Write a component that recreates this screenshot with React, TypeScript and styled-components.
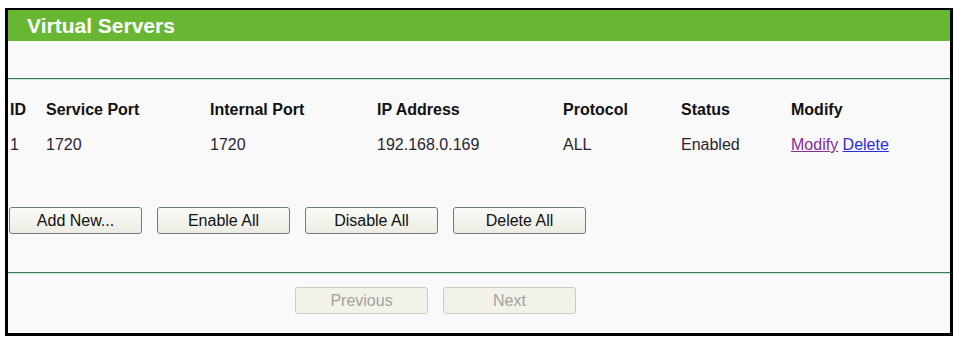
import React from "react";
import styled, { createGlobalStyle } from "styled-components";

const GlobalStyle = createGlobalStyle`
  html, body { margin: 0; padding: 0; background: #ffffff; }
  body { font-family: "Liberation Sans", Arial, sans-serif; }
`;

const Frame = styled.div`
  margin: 8px 0 0 5px;
  width: 942px;
  height: 323px;
  border-style: solid;
  border-color: #000;
  border-width: 2px 3px 3px 3px;
  background: #f9f9f9;
  display: flex;
  flex-direction: column;
`;

const TitleBar = styled.div`
  height: 31px;
  background: #67b733;
  color: #ffffff;
  font-weight: bold;
  font-size: 21px;
  line-height: 31px;
  padding-left: 19px;
`;

const Divider = styled.div<{ $top: number }>`
  margin-top: ${(p) => p.$top}px;
  height: 1px;
  background: #3f7a58;
  border-bottom: 1px solid #c4e6d0;
`;

const Table = styled.div`
  margin-top: 12px;
  display: grid;
  grid-template-columns: 36px 164px 167px 186px 118px 110px 1fr;
  padding-left: 2px;
`;

const Cell = styled.div<{ $head?: boolean }>`
  font-size: 16px;
  line-height: 35px;
  height: 35px;
  white-space: nowrap;
  font-weight: ${(p) => (p.$head ? "bold" : "normal")};
  color: ${(p) => (p.$head ? "#111" : "#2a2430")};
`;

const Link = styled.a<{ $visited?: boolean }>`
  color: ${(p) => (p.$visited ? "#8a2c96" : "#2b2be0")};
  text-decoration: underline;
  cursor: pointer;
`;

const ButtonRow = styled.div<{ $top: number; $left: number }>`
  display: flex;
  gap: 15px;
  margin-top: ${(p) => p.$top}px;
  padding-left: ${(p) => p.$left}px;
`;

const Button = styled.button<{ $disabled?: boolean }>`
  width: 133px;
  height: 27px;
  box-sizing: border-box;
  padding: 0;
  font-family: "Liberation Sans", Arial, sans-serif;
  font-size: 16px;
  color: ${(p) => (p.$disabled ? "#a3a39c" : "#111")};
  background: ${(p) =>
    p.$disabled
      ? "#f2f2ea"
      : "linear-gradient(#fbfbf7, #ecebe3)"};
  border: 1px solid ${(p) => (p.$disabled ? "#cdccc3" : "#6f7a86")};
  border-radius: 3px;
`;

const headers = ["ID", "Service Port", "Internal Port", "IP Address", "Protocol", "Status", "Modify"];

export default function App() {
  return (
    <>
      <GlobalStyle />
      <Frame>
        <TitleBar>Virtual Servers</TitleBar>
        <Divider $top={37} />
        <Table>
          {headers.map((h) => (
            <Cell key={h} $head>
              {h}
            </Cell>
          ))}
          <Cell>1</Cell>
          <Cell>1720</Cell>
          <Cell>1720</Cell>
          <Cell>192.168.0.169</Cell>
          <Cell>ALL</Cell>
          <Cell>Enabled</Cell>
          <Cell>
            <Link $visited>Modify</Link> <Link>Delete</Link>
          </Cell>
        </Table>
        <ButtonRow $top={45} $left={1}>
          <Button>Add New...</Button>
          <Button>Enable All</Button>
          <Button>Disable All</Button>
          <Button>Delete All</Button>
        </ButtonRow>
        <Divider $top={38} />
        <ButtonRow $top={13} $left={287}>
          <Button $disabled disabled>Previous</Button>
          <Button $disabled disabled>Next</Button>
        </ButtonRow>
      </Frame>
    </>
  );
}
